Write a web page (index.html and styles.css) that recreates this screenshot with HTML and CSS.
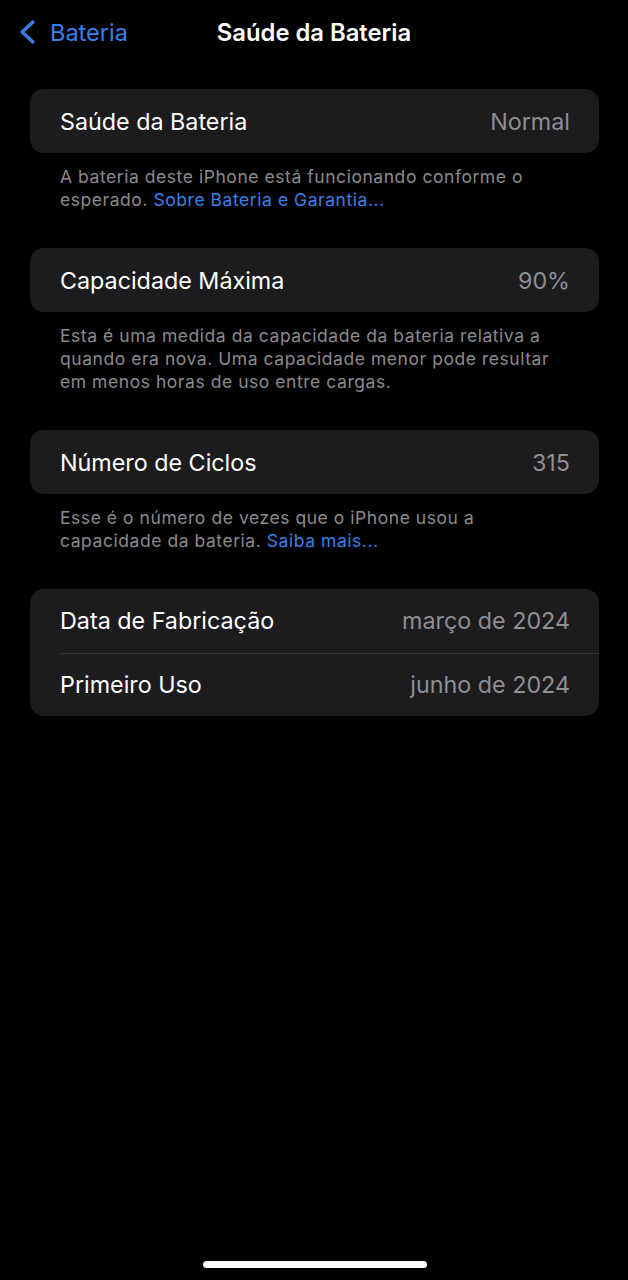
FILE: index.html
```html
<!DOCTYPE html>
<html lang="pt-BR">
<head>
<meta charset="utf-8">
<title>Saúde da Bateria</title>
<link rel="stylesheet" href="styles.css">
</head>
<body>
<div class="screen">
  <header class="nav">
    <a class="back">
      <svg class="chev" width="18" height="24" viewBox="0 0 18 24"><path d="M15 2 L4 12 L15 22" fill="none" stroke="#3a80ec" stroke-width="3.2" stroke-linecap="round" stroke-linejoin="round"/></svg>
      <span>Bateria</span>
    </a>
    <h1 class="title">Saúde da Bateria</h1>
  </header>

  <section class="group">
    <div class="card">
      <div class="row"><span class="label">Saúde da Bateria</span><span class="value">Normal</span></div>
    </div>
    <p class="note">A bateria deste iPhone está funcionando conforme o esperado. <a class="link">Sobre Bateria e Garantia...</a></p>
  </section>

  <section class="group">
    <div class="card">
      <div class="row"><span class="label">Capacidade Máxima</span><span class="value">90%</span></div>
    </div>
    <p class="note">Esta é uma medida da capacidade da bateria relativa a quando era nova. Uma capacidade menor pode resultar em menos horas de uso entre cargas.</p>
  </section>

  <section class="group">
    <div class="card">
      <div class="row"><span class="label">Número de Ciclos</span><span class="value">315</span></div>
    </div>
    <p class="note">Esse é o número de vezes que o iPhone usou a capacidade da bateria. <a class="link">Saiba mais...</a></p>
  </section>

  <section class="group">
    <div class="card">
      <div class="row half"><span class="label">Data de Fabricação</span><span class="value">março de 2024</span></div>
      <div class="row half sep"><span class="label">Primeiro Uso</span><span class="value">junho de 2024</span></div>
    </div>
  </section>

  <div class="home"></div>
</div>
</body>
</html>
```

FILE: styles.css
```css
html, body {
  margin: 0;
  padding: 0;
  background: #000;
}
body {
  font-family: Inter, "Noto Sans", "Liberation Sans", sans-serif;
  color: #fff;
}
.screen {
  width: 628px;
  height: 1280px;
  position: relative;
  overflow: hidden;
  background: #000;
}
.nav {
  height: 64px;
  position: relative;
  display: flex;
  align-items: center;
  justify-content: center;
}
.back {
  position: absolute;
  left: 18px;
  top: 0;
  height: 64px;
  display: flex;
  align-items: center;
  gap: 14px;
  color: #3a80ec;
  font-size: 23.5px;
}
.chev { display: block; }
.title {
  margin: 0;
  font-size: 23.8px;
  font-weight: 600;
  color: #fff;
}
.group {
  padding-top: 25px;
}
.group + .group {
  padding-top: 0;
}
.card {
  margin: 0 29px 0 30px;
  background: #1c1c1e;
  border-radius: 14px;
  overflow: hidden;
}
.row {
  height: 64px;
  display: flex;
  align-items: center;
  justify-content: space-between;
  padding: 0 29px 0 30px;
  font-size: 23.3px;
  position: relative;
}
.row.half { height: 63.5px; }
.row.sep::before {
  content: "";
  position: absolute;
  left: 30px;
  right: 0;
  top: 0;
  height: 1px;
  background: #333336;
}
.label { color: #fff; }
.value { color: #8e8e93; }
.note {
  margin: 0 60px 37px 60px;
  padding-top: 12px;
  font-size: 17.5px;
  line-height: 23px;
  color: #8a8a8e;
  letter-spacing: 0.55px;
}
.link { color: #3a80ec; }
.home {
  position: absolute;
  left: 203px;
  top: 1261px;
  width: 224px;
  height: 7px;
  border-radius: 4px;
  background: #fff;
}
```
